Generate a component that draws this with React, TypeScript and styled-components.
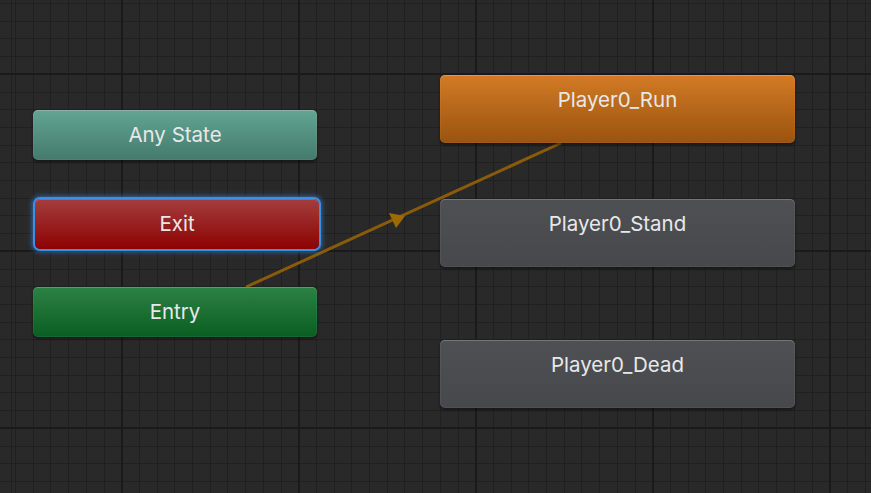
import React from "react";
import styled, { createGlobalStyle, css } from "styled-components";

const GlobalStyle = createGlobalStyle`
  html, body {
    margin: 0;
    padding: 0;
    background: #282828;
    overflow: hidden;
  }
  * {
    box-sizing: border-box;
  }
`;

type Variant = "any" | "exit" | "entry" | "default" | "state";

const fills: Record<Variant, string> = {
  any: "linear-gradient(180deg, #62a592 0%, #447a6d 100%)",
  exit: "linear-gradient(180deg, #a33e3e 0%, #8e0202 100%)",
  entry: "linear-gradient(180deg, #2c8145 0%, #0a5e22 100%)",
  default: "linear-gradient(180deg, #d27b25 0%, #9a530e 100%)",
  state: "linear-gradient(180deg, #4e5054 0%, #46484c 100%)",
};

const Canvas = styled.div`
  position: relative;
  width: 871px;
  height: 493px;
  overflow: hidden;
  background-color: #292929;
  background-image:
    repeating-linear-gradient(90deg, #1a1a1a 0 2px, transparent 2px 177px),
    repeating-linear-gradient(180deg, #1a1a1a 0 2px, transparent 2px 177px),
    repeating-linear-gradient(90deg, #202020 0 1px, transparent 1px 17.7px),
    repeating-linear-gradient(180deg, #202020 0 1px, transparent 1px 17.7px);
  background-position:
    121px 0,
    0 73px,
    15px 0,
    0 3px;
`;

const Wires = styled.svg`
  position: absolute;
  inset: 0;
  width: 100%;
  height: 100%;
`;

const Node = styled.div<{ $variant: Variant; $selected?: boolean }>`
  position: absolute;
  border-radius: 5px;
  background: ${(p) => fills[p.$variant]};
  color: #e8e8e8;
  font-family: Inter, "Noto Sans", sans-serif;
  font-size: 20.5px;
  line-height: 50px;
  text-align: center;
  box-shadow:
    inset 0 1px 0 rgba(255, 255, 255, 0.18),
    inset 0 0 0 1px rgba(255, 255, 255, 0.05),
    0 2px 3px rgba(0, 0, 0, 0.45);
  ${(p) =>
    p.$selected &&
    css`
      box-shadow:
        inset 0 1px 0 rgba(255, 255, 255, 0.18),
        0 0 0 2px #3c8fe2,
        0 0 5px 3px rgba(56, 138, 226, 0.65);
    `}
`;

const nodes: { label: string; variant: Variant; x: number; y: number; w: number; h: number; selected?: boolean }[] = [
  { label: "Any State", variant: "any", x: 33, y: 110, w: 284, h: 50 },
  { label: "Exit", variant: "exit", x: 35, y: 199, w: 284, h: 50, selected: true },
  { label: "Entry", variant: "entry", x: 33, y: 287, w: 284, h: 50 },
  { label: "Player0_Run", variant: "default", x: 440, y: 75, w: 355, h: 68 },
  { label: "Player0_Stand", variant: "state", x: 440, y: 199, w: 355, h: 68 },
  { label: "Player0_Dead", variant: "state", x: 440, y: 340, w: 355, h: 68 },
];

const App = () => (
  <>
    <GlobalStyle />
    <Canvas>
      <Wires viewBox="0 0 871 493">
        <line x1="246" y1="287" x2="561" y2="143" stroke="#8a5b0a" strokeWidth="3" />
        <polygon points="389,213 405,216 396,228" fill="#a06a02" />
      </Wires>
      {nodes.map((n) => (
        <Node
          key={n.label}
          $variant={n.variant}
          $selected={n.selected}
          style={{ left: n.x, top: n.y, width: n.w, height: n.h }}
        >
          {n.label}
        </Node>
      ))}
    </Canvas>
  </>
);

export default App;
